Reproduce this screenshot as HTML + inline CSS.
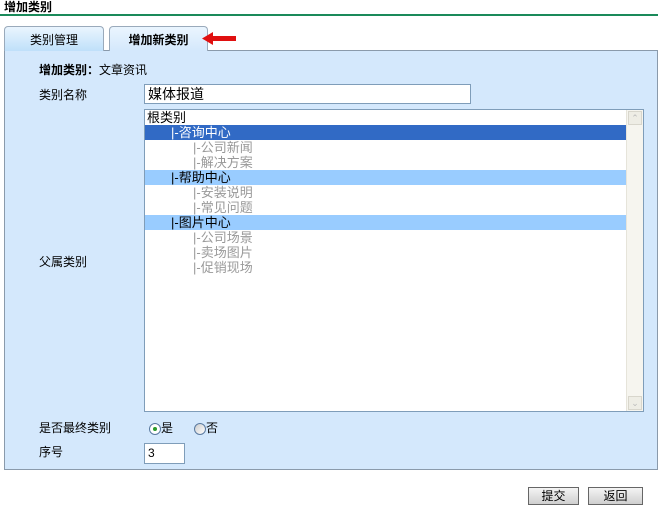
<!DOCTYPE html>
<html><head><meta charset="utf-8"><style>
*{margin:0;padding:0;box-sizing:border-box}
body{width:658px;height:509px;background:#fff;font-family:"Liberation Sans","SimSun","Noto Sans CJK SC",sans-serif;font-size:12px;color:#000;position:relative;overflow:hidden}
.abs{position:absolute}
.title{left:4px;top:0;font-weight:bold;font-size:12px;line-height:14px}
.line{left:0;top:14px;width:658px;height:2px;background:#1a8a5a}
.tab{top:26px;height:25px;border:1px solid #9aaabb;border-bottom:none;border-radius:4px 4px 0 0;background:linear-gradient(#eaf5fe,#bfe0fa);text-align:center;line-height:26px;font-size:12px}
.panel{left:4px;top:50px;width:654px;height:420px;background:#d4e8fc;border:1px solid #8a9aab}
.lbl{font-size:12px;line-height:14px}
.inp{background:#fff;border:1px solid #7f9db9}
.list{left:144px;top:109px;width:500px;height:303px;background:#fff;border:1px solid #7f9db9;overflow:hidden}
.row{height:15px;line-height:15px;font-size:13px;white-space:pre}
.l1{padding-left:26px;margin-right:17px}
.g{color:#999;padding-left:48px}
.sb{position:absolute;right:0;top:0;width:17px;height:301px;background:#f6f5ef;border-left:1px solid #e6e4da}
.btn{top:487px;height:18px;border:1px solid #666;background:linear-gradient(#f4f4f4,#cfcfcf);text-align:center;line-height:16px;font-size:12px}
.radio{width:12px;height:12px;border:1px solid #5a7aa0;border-radius:50%;background:#fff;display:inline-block;vertical-align:middle;position:relative}
</style></head><body>
<div class="abs title">增加类别</div>
<div class="abs line"></div>
<div class="abs panel"></div>
<div class="abs tab" style="left:4px;width:100px">类别管理</div>
<div class="abs tab" style="left:109px;width:99px;height:25px;background:linear-gradient(#eaf5fe,#d4e8fc);font-weight:bold">增加新类别</div>
<svg class="abs" style="left:202px;top:32px" width="35" height="13"><polygon points="0,6.5 11,0 11,4 34,4 34,9 11,9 11,13" fill="#e01010"/></svg>
<div class="abs lbl" style="left:39px;top:63px"><b>增加类别：</b>文章资讯</div>
<div class="abs lbl" style="left:39px;top:88px">类别名称</div>
<div class="abs inp" style="left:144px;top:84px;width:327px;height:20px;font-size:14px;line-height:18px;padding-left:3px">媒体报道</div>
<div class="abs lbl" style="left:39px;top:255px">父属类别</div>
<div class="abs list">
<div class="row" style="padding-left:2px">根类别</div>
<div class="row l1" style="background:#316ac5;color:#fff">|-咨询中心</div>
<div class="row g">|-公司新闻</div>
<div class="row g">|-解决方案</div>
<div class="row l1" style="background:#99ccff">|-帮助中心</div>
<div class="row g">|-安装说明</div>
<div class="row g">|-常见问题</div>
<div class="row l1" style="background:#99ccff">|-图片中心</div>
<div class="row g">|-公司场景</div>
<div class="row g">|-卖场图片</div>
<div class="row g">|-促销现场</div>
<div class="sb">
<div style="position:absolute;left:1px;top:1px;width:14px;height:14px;border:1px solid #d8d6cc;background:#eeede5;color:#bbb;font-size:9px;text-align:center;line-height:12px">⌃</div>
<div style="position:absolute;left:1px;bottom:1px;width:14px;height:14px;border:1px solid #d8d6cc;background:#eeede5;color:#bbb;font-size:9px;text-align:center;line-height:12px">⌄</div>
</div>
</div>
<div class="abs lbl" style="left:39px;top:421px">是否最终类别</div>
<div class="abs lbl" style="left:149px;top:421px"><span class="radio"><span style="position:absolute;left:3px;top:3px;width:4px;height:4px;border-radius:50%;background:#2a9a2a"></span></span>是</div>
<div class="abs lbl" style="left:194px;top:421px"><span class="radio" style="background:linear-gradient(135deg,#ccc,#fff)"></span>否</div>
<div class="abs lbl" style="left:39px;top:445px">序号</div>
<div class="abs inp" style="left:144px;top:443px;width:41px;height:21px;line-height:19px;padding-left:3px">3</div>
<div class="abs btn" style="left:528px;width:51px">提交</div>
<div class="abs btn" style="left:588px;width:55px">返回</div>
</body></html>
